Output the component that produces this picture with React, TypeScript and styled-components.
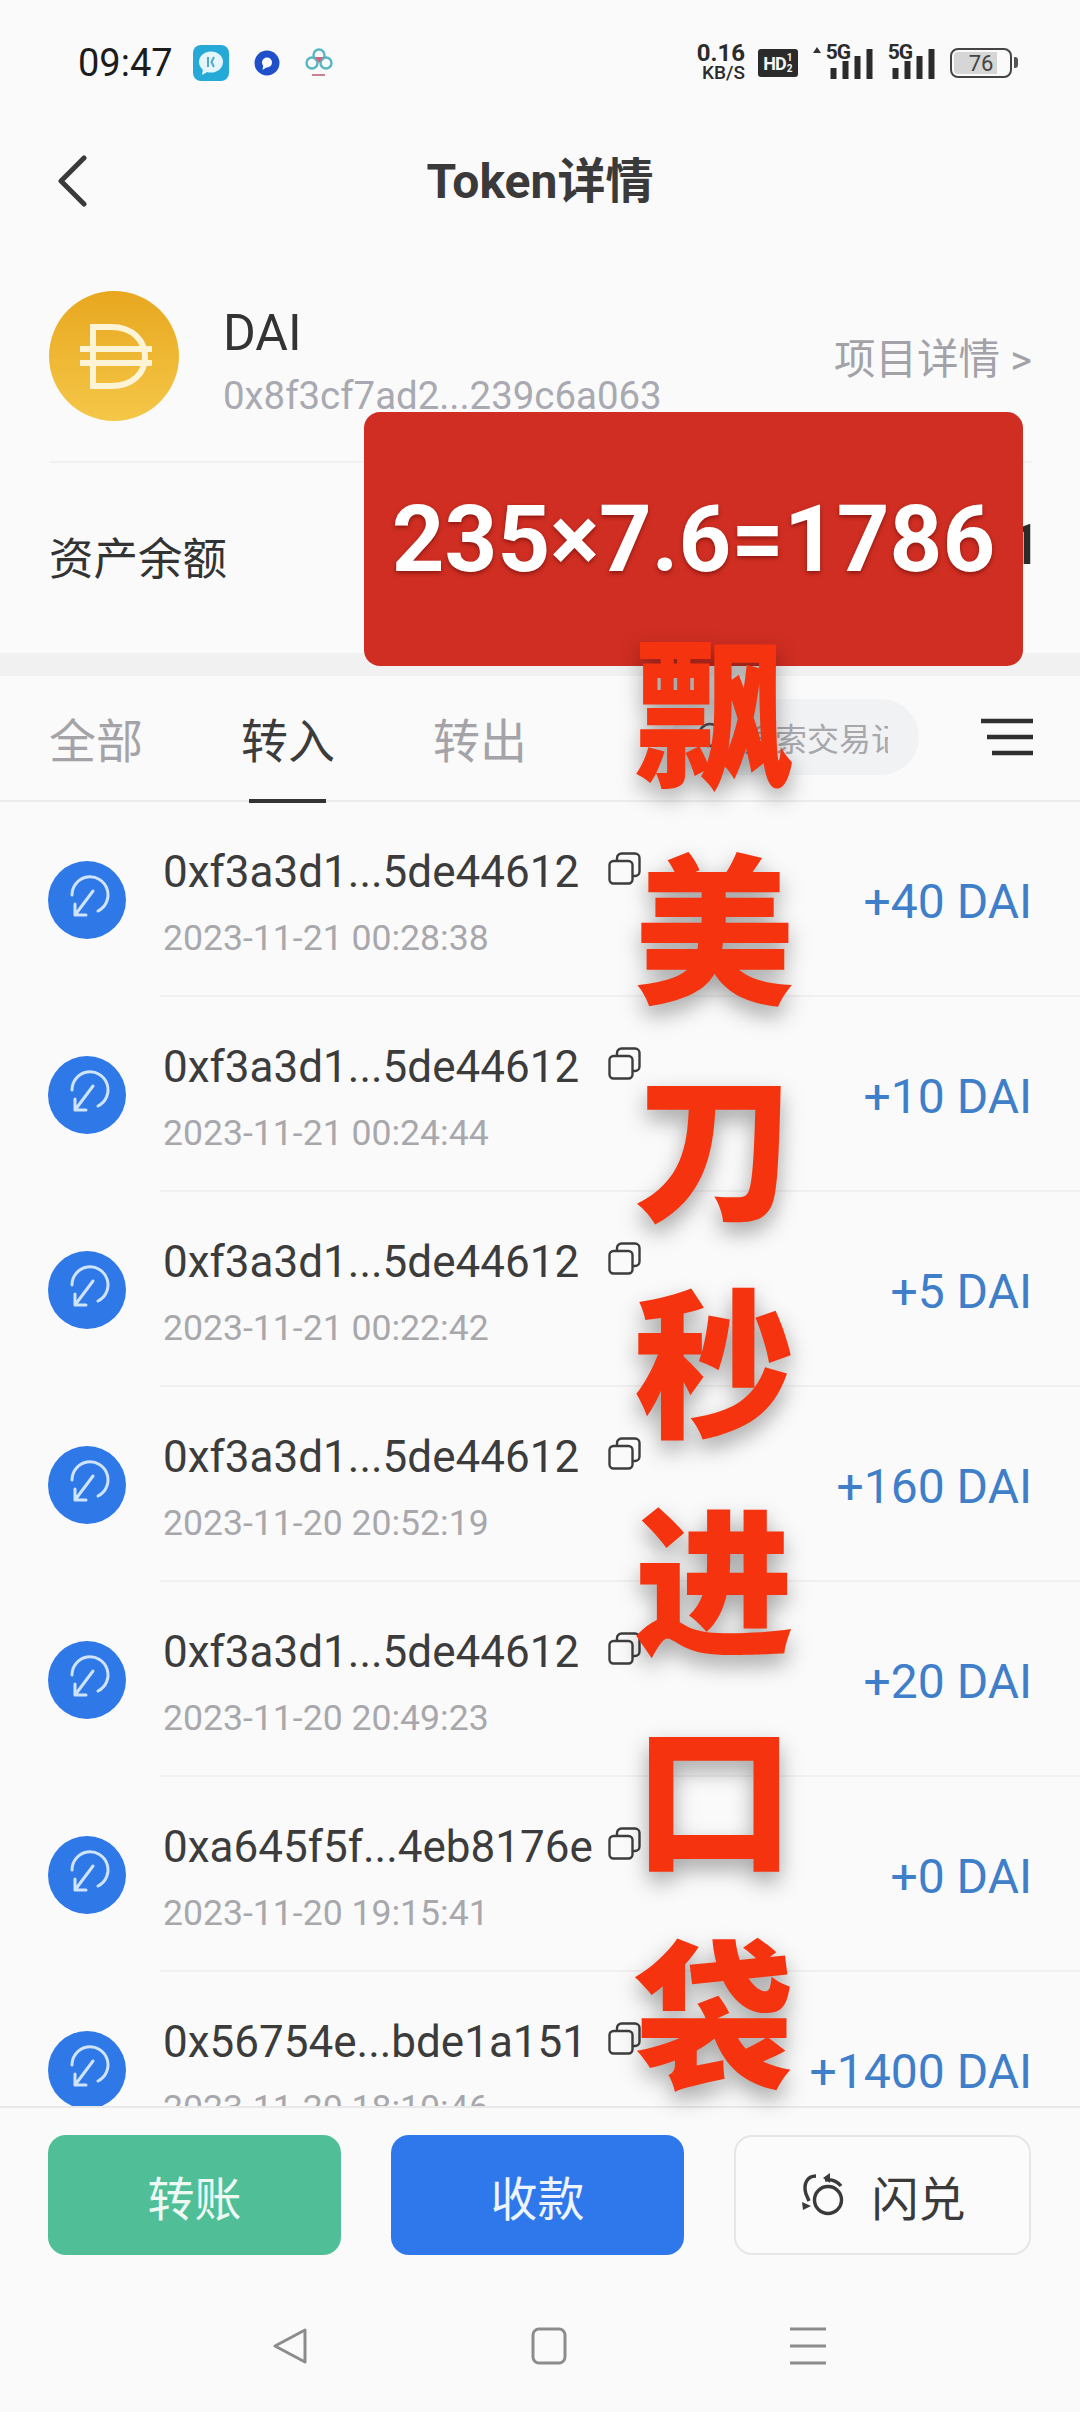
import React from "react";
import styled, { createGlobalStyle } from "styled-components";

const FONT = `Roboto, "Noto Sans CJK SC", sans-serif`;

type Transfer = { address: string; time: string; amount: string };

const transfers: Transfer[] = [
  { address: "0xf3a3d1...5de44612", time: "2023-11-21 00:28:38", amount: "+40 DAI" },
  { address: "0xf3a3d1...5de44612", time: "2023-11-21 00:24:44", amount: "+10 DAI" },
  { address: "0xf3a3d1...5de44612", time: "2023-11-21 00:22:42", amount: "+5 DAI" },
  { address: "0xf3a3d1...5de44612", time: "2023-11-20 20:52:19", amount: "+160 DAI" },
  { address: "0xf3a3d1...5de44612", time: "2023-11-20 20:49:23", amount: "+20 DAI" },
  { address: "0xa645f5f...4eb8176e", time: "2023-11-20 19:15:41", amount: "+0 DAI" },
  { address: "0x56754e...bde1a151", time: "2023-11-20 18:10:46", amount: "+1400 DAI" },
];

const slogan = ["飘", "美", "刀", "秒", "进", "口", "袋"];

const Signal = () => (
  <g fill="#2b2b2b">
    <rect x="0" y="19" width="6" height="11" />
    <rect x="12" y="12" width="6" height="18" />
    <rect x="24" y="7" width="6" height="23" />
    <rect x="36" y="0" width="6" height="30" />
  </g>
);

const ChatIcon = () => (
  <svg width="36" height="36" viewBox="0 0 36 36">
    <rect width="36" height="36" rx="8" fill="#25a9d6" />
    <ellipse cx="18" cy="17" rx="12" ry="10.5" fill="#e4f5fb" />
    <path d="M10 24 L9 30 L16 26 Z" fill="#e4f5fb" />
    <path d="M15 12 V22 M21 12 L18.5 17 L21 22" stroke="#53a9c9" strokeWidth="2" fill="none" />
  </svg>
);

const QIcon = () => (
  <svg width="26" height="26" viewBox="0 0 26 26">
    <circle cx="13" cy="13" r="12.5" fill="#1f4fc9" />
    <circle cx="13" cy="12.5" r="5" fill="#fff" />
    <path d="M13 17 L8.5 20 L9.5 14 Z" fill="#fff" />
  </svg>
);

const CloudIcon = () => (
  <svg width="28" height="30" viewBox="0 0 28 30">
    <g fill="none" strokeWidth="2.4">
      <circle cx="14" cy="7" r="5.5" stroke="#56b6c2" />
      <circle cx="7" cy="15" r="5.5" stroke="#56b6c2" />
      <circle cx="21" cy="15" r="5.5" stroke="#56b6c2" />
    </g>
    <path d="M10 9 H18 L14 15 Z" fill="#d9607c" />
    <rect x="7" y="26" width="13" height="2" fill="#c9808f" />
  </svg>
);

const CopyIcon = () => (
  <svg width="33" height="33" viewBox="0 0 33 33" fill="none" stroke="#3d3d3d" strokeWidth="2.4">
    <rect x="1.5" y="9" width="23" height="22.5" rx="4" />
    <path d="M9 8.5 V6 A4.5 4.5 0 0 1 13.5 1.5 H27 A4.5 4.5 0 0 1 31.5 6 V19.5 A4.5 4.5 0 0 1 27 24 H25" />
  </svg>
);

const IncomingIcon = () => (
  <svg width="78" height="78" viewBox="0 0 78 78">
    <circle cx="39" cy="39" r="39" fill="#2f78e8" />
    <g fill="none" stroke="#cfe3fb" strokeWidth="3" strokeLinecap="round" strokeLinejoin="round">
      <path d="M24 34 A18 18 0 1 1 50 50" />
      <path d="M45 30 L27 54 M27 43 L27 54 L38 54" />
    </g>
  </svg>
);

const DaiLogo = () => (
  <svg width="130" height="130" viewBox="0 0 130 130">
    <defs>
      <linearGradient id="daiFill" x1="0" y1="0" x2="0" y2="1">
        <stop offset="0" stopColor="#e8a71f" />
        <stop offset="1" stopColor="#f5c748" />
      </linearGradient>
    </defs>
    <circle cx="65" cy="65" r="65" fill="url(#daiFill)" />
    <g fill="none" stroke="#fdf4d6" strokeWidth="6">
      <path d="M44 36 H62 C84 36 96 50 96 66 C96 82 84 95 62 95 H44 Z" />
      <path d="M31 58 H103 M31 72 H103" />
    </g>
  </svg>
);

const SwapIcon = () => (
  <svg width="46" height="46" viewBox="0 0 46 46" fill="none" stroke="#3a3a3a" strokeWidth="3.4">
    <circle cx="28" cy="28" r="13.5" />
    <path d="M16 4 C7 4 3 12 6 22 L9 29" />
    <path d="M2 30 L11 34 L3 38 Z" fill="#3a3a3a" stroke="none" />
    <path d="M25 8 C31 7 37 9 41 14" />
    <path d="M30 1 L30 11 L23 6 Z" fill="#3a3a3a" stroke="none" />
  </svg>
);

const GlobalStyle = createGlobalStyle`
  html, body {
    margin: 0;
    padding: 0;
    background: #fafafa;
  }
`;

const Page = styled.div`
  position: relative;
  display: flex;
  flex-direction: column;
  width: 1080px;
  height: 2412px;
  overflow: hidden;
  background: #fafafa;
  font-family: ${FONT};
  color: #333;
`;

const StatusBar = styled.div`
  display: flex;
  align-items: center;
  flex: none;
  height: 126px;
  padding: 0 68px 0 78px;
`;

const Clock = styled.span`
  font-size: 38px;
  color: #1c1c1c;
  margin-right: 20px;
`;

const NoticeIcons = styled.div`
  display: flex;
  align-items: center;
  gap: 25px;
`;

const StatusRight = styled.div`
  display: flex;
  align-items: center;
  margin-left: auto;
`;

const Speed = styled.div`
  display: flex;
  flex-direction: column;
  align-items: flex-end;
  width: 50px;
  font-size: 24px;
  font-weight: 700;
  line-height: 19px;
  color: #2b2b2b;

  small {
    font-size: 19px;
    font-weight: 500;
  }
`;

const HdBadge = styled.span`
  display: flex;
  align-items: center;
  justify-content: center;
  gap: 1px;
  width: 40px;
  height: 28px;
  margin-left: 13px;
  border-radius: 3px;
  background: #2b2b2b;
  color: #f5f5f5;
  font-size: 18px;
  font-weight: 700;
  letter-spacing: -1px;

  small {
    font-size: 10px;
    line-height: 11px;
    width: 6px;
    letter-spacing: 0;
  }
`;

const Network = styled.div<{ $w: number }>`
  position: relative;
  width: ${(p) => p.$w}px;
  height: 32px;
  margin-left: ${(p) => (p.$w > 50 ? 15 : 16)}px;

  svg {
    position: absolute;
    right: 0;
    bottom: 0;
  }

  span {
    position: absolute;
    right: 23px;
    top: -7px;
    font-size: 21px;
    font-weight: 700;
    letter-spacing: -1px;
    color: #2b2b2b;
  }
`;

const UpArrow = styled.i`
  position: absolute;
  left: 0;
  top: 0;
  border: 4px solid transparent;
  border-top: 0;
  border-bottom: 6px solid #333;
`;

const Battery = styled.div`
  position: relative;
  display: flex;
  align-items: center;
  justify-content: center;
  box-sizing: border-box;
  width: 62px;
  height: 30px;
  margin-left: 15px;
  border: 2.5px solid #444;
  border-radius: 8px;
  background: linear-gradient(90deg, #d6d6d6 78%, transparent 78%);
  background-clip: content-box;
  padding: 2px;
  font-size: 22px;
  color: #444;

  &::after {
    content: "";
    position: absolute;
    right: -8px;
    top: 7px;
    width: 4px;
    height: 11px;
    border-radius: 0 3px 3px 0;
    background: #555;
  }
`;

const NavBar = styled.div`
  position: relative;
  display: flex;
  align-items: center;
  justify-content: center;
  flex: none;
  box-sizing: border-box;
  height: 108px;
  padding-bottom: 6px;
`;

const BackButton = styled.svg`
  position: absolute;
  left: 56px;
  top: 29px;
`;

const NavTitle = styled.h1`
  margin: 0;
  font-size: 48px;
  font-weight: 700;
  color: #3a3a3a;
`;

const TokenHeader = styled.div`
  display: flex;
  align-items: flex-start;
  flex: none;
  height: 170px;
  margin: 0 48px 0 49px;
  padding-top: 57px;
  border-bottom: 2px solid #f1f1f1;
`;

const TokenInfo = styled.div`
  display: flex;
  flex-direction: column;
  margin-left: 44px;
`;

const TokenName = styled.span`
  font-size: 50px;
  line-height: 58px;
  margin-top: 13px;
  color: #333;
`;

const TokenAddress = styled.span`
  font-size: 38.4px;
  line-height: 44px;
  margin-top: 12px;
  color: #a9a9b1;
`;

const DetailLink = styled.span`
  margin: 43px 0 0 auto;
  font-size: 41.5px;
  line-height: 52px;
  color: #a2a2a8;
`;

const BalanceRow = styled.div`
  display: flex;
  align-items: center;
  justify-content: space-between;
  flex: none;
  height: 190px;
  margin: 0 48px 0 49px;
  font-size: 44.5px;
  color: #333;
`;

const BalanceLabel = styled.span`
  margin-bottom: 6px;
`;

const BalanceValue = styled.span`
  margin: 0 -9px 26px 0;
  font-size: 56px;
  font-weight: 500;
  color: #2b2b2b;
`;

const Band = styled.div`
  flex: none;
  height: 23px;
  background: #f1f1f1;
`;

const TabBar = styled.div`
  display: flex;
  align-items: center;
  flex: none;
  box-sizing: border-box;
  height: 126px;
  padding: 0 47px 2px 49px;
  border-bottom: 2px solid #ececec;
`;

const Tab = styled.span<{ $active?: boolean }>`
  position: relative;
  font-size: 47px;
  margin-right: 98px;
  color: ${(p) => (p.$active ? "#3c3c3c" : "#a4a4a8")};

  &::after {
    content: "";
    display: ${(p) => (p.$active ? "block" : "none")};
    position: absolute;
    left: 8px;
    right: 9px;
    bottom: -31px;
    height: 4px;
    background: #333;
  }
`;

const SearchPill = styled.div`
  display: flex;
  align-items: center;
  gap: 14px;
  box-sizing: border-box;
  width: 247px;
  height: 76px;
  margin-left: auto;
  padding: 0 31px 0 23px;
  border-radius: 38px;
  background: #f1f2f4;
`;

const SearchText = styled.span`
  flex: 1;
  overflow: hidden;
  white-space: nowrap;
  font-size: 32px;
  color: #a8a8ac;
`;

const MenuIcon = styled.svg`
  margin-left: 62px;
`;

const TransferList = styled.div`
  flex: 1;
  min-height: 0;
  overflow: hidden;
`;

const Row = styled.div`
  display: flex;
  align-items: center;
  height: 195px;
  padding-left: 48px;
`;

const RowBody = styled.div`
  position: relative;
  display: flex;
  align-items: center;
  flex: 1;
  box-sizing: border-box;
  height: 195px;
  margin-left: 34px;
  padding: 0 48px 0 3px;
  border-bottom: 2px solid #f0f0f0;
`;

const RowText = styled.div`
  display: flex;
  flex-direction: column;
  width: 445px;
  height: 195px;
`;

const Address = styled.span`
  margin-top: 46px;
  font-size: 44px;
  line-height: 50px;
  color: #3c3c3c;
  white-space: nowrap;
`;

const RowTime = styled.span`
  margin-top: 20px;
  font-size: 35.6px;
  line-height: 42px;
  color: #a8a8ac;
  white-space: nowrap;
`;

const CopyWrap = styled.div`
  align-self: flex-start;
  margin-top: 50px;
  line-height: 0;
`;

const Amount = styled.span`
  margin: 6px 0 0 auto;
  font-size: 48px;
  color: #3f7fca;
  white-space: nowrap;
`;

const ActionBar = styled.div`
  display: flex;
  gap: 50px;
  flex: none;
  height: 120px;
  padding: 27px 49px 0 48px;
  border-top: 2px solid #e8e8e8;
`;

const ActionButton = styled.button<{ $bg: string; $fg: string; $outlined?: boolean }>`
  display: flex;
  align-items: center;
  justify-content: center;
  gap: 26px;
  flex: 1;
  height: 120px;
  padding: 0;
  border: ${(p) => (p.$outlined ? "2px solid #e6e6e6" : "none")};
  border-radius: 18px;
  background: ${(p) => p.$bg};
  color: ${(p) => p.$fg};
  font-family: ${FONT};
  font-size: 47px;
`;

const SystemNav = styled.div`
  display: flex;
  align-items: center;
  justify-content: space-between;
  flex: none;
  box-sizing: border-box;
  height: 157px;
  padding: 25px 254px 0 272px;
`;

const Banner = styled.div`
  position: absolute;
  left: 364px;
  top: 412px;
  display: flex;
  align-items: center;
  justify-content: center;
  width: 659px;
  height: 254px;
  border-radius: 16px;
  background: #d02e22;
  color: #fff;
  font-family: Roboto, sans-serif;
  font-size: 92px;
  font-weight: 700;
  text-shadow: 0 2px 4px rgba(70, 0, 0, 0.5);
`;

const Slogan = styled.div`
  position: absolute;
  left: 634px;
  top: 596px;
  display: flex;
  flex-direction: column;
  width: 160px;
  font-family: "Noto Sans CJK SC", sans-serif;
  font-size: 160px;
  font-weight: 900;
  line-height: 217px;
  color: #f5340f;
  text-shadow: 0 10px 22px rgba(0, 0, 0, 0.35);
`;

const App = () => (
  <Page>
    <GlobalStyle />
    <StatusBar>
      <Clock>09:47</Clock>
      <NoticeIcons>
        <ChatIcon />
        <QIcon />
        <CloudIcon />
      </NoticeIcons>
      <StatusRight>
        <Speed>
          0.16
          <small>KB/S</small>
        </Speed>
        <HdBadge>
          HD
          <small>1 2</small>
        </HdBadge>
        <Network $w={60}>
          <UpArrow />
          <span>5G</span>
          <svg width="43" height="30" viewBox="0 0 42 30">
            <Signal />
          </svg>
        </Network>
        <Network $w={46}>
          <span>5G</span>
          <svg width="43" height="30" viewBox="0 0 42 30">
            <Signal />
          </svg>
        </Network>
        <Battery>76</Battery>
      </StatusRight>
    </StatusBar>

    <NavBar>
      <BackButton width="32" height="52" viewBox="0 0 32 52" fill="none" stroke="#3a3a3a" strokeWidth="5" strokeLinecap="round" strokeLinejoin="round">
        <path d="M28 3 L5 26 L28 49" />
      </BackButton>
      <NavTitle>Token详情</NavTitle>
    </NavBar>

    <TokenHeader>
      <DaiLogo />
      <TokenInfo>
        <TokenName>DAI</TokenName>
        <TokenAddress>0x8f3cf7ad2...239c6a063</TokenAddress>
      </TokenInfo>
      <DetailLink>项目详情 &gt;</DetailLink>
    </TokenHeader>

    <BalanceRow>
      <BalanceLabel>资产余额</BalanceLabel>
      <BalanceValue>1786.1</BalanceValue>
    </BalanceRow>
    <Band />

    <TabBar>
      <Tab>全部</Tab>
      <Tab $active>转入</Tab>
      <Tab>转出</Tab>
      <SearchPill>
        <svg width="34" height="34" viewBox="0 0 34 34" fill="none" stroke="#555" strokeWidth="2.6" strokeLinecap="round">
          <circle cx="15" cy="15" r="11" />
          <path d="M24 24 L30 30" />
        </svg>
        <SearchText>搜索交易记录</SearchText>
      </SearchPill>
      <MenuIcon width="52" height="38" viewBox="0 0 52 38" fill="none" stroke="#2f2f2f" strokeWidth="4.5">
        <path d="M0 3 H52 M6 19 H52 M11 35 H52" />
      </MenuIcon>
    </TabBar>

    <TransferList>
      {transfers.map((t, i) => (
        <Row key={i}>
          <IncomingIcon />
          <RowBody>
            <RowText>
              <Address>{t.address}</Address>
              <RowTime>{t.time}</RowTime>
            </RowText>
            <CopyWrap>
              <CopyIcon />
            </CopyWrap>
            <Amount>{t.amount}</Amount>
          </RowBody>
        </Row>
      ))}
    </TransferList>

    <ActionBar>
      <ActionButton $bg="#50bf98" $fg="#eef9f4">转账</ActionButton>
      <ActionButton $bg="#2f78ec" $fg="#eef4fe">收款</ActionButton>
      <ActionButton $bg="#fbfbfb" $fg="#3a3a3a" $outlined>
        <SwapIcon />
        闪兑
      </ActionButton>
    </ActionBar>

    <SystemNav>
      <svg width="36" height="36" viewBox="0 0 36 36" fill="none" stroke="#8c8c8c" strokeWidth="3" strokeLinejoin="round">
        <path d="M33 2 V34 L3 18 Z" />
      </svg>
      <svg width="36" height="38" viewBox="0 0 36 38" fill="none" stroke="#8c8c8c" strokeWidth="3">
        <rect x="2" y="2" width="32" height="34" rx="6" />
      </svg>
      <svg width="36" height="38" viewBox="0 0 36 38" fill="none" stroke="#8c8c8c" strokeWidth="3">
        <path d="M0 2 H36 M0 19 H36 M0 36 H36" />
      </svg>
    </SystemNav>

    <Banner>235×7.6=1786</Banner>
    <Slogan>
      {slogan.map((c) => (
        <span key={c}>{c}</span>
      ))}
    </Slogan>
  </Page>
);

export default App;
